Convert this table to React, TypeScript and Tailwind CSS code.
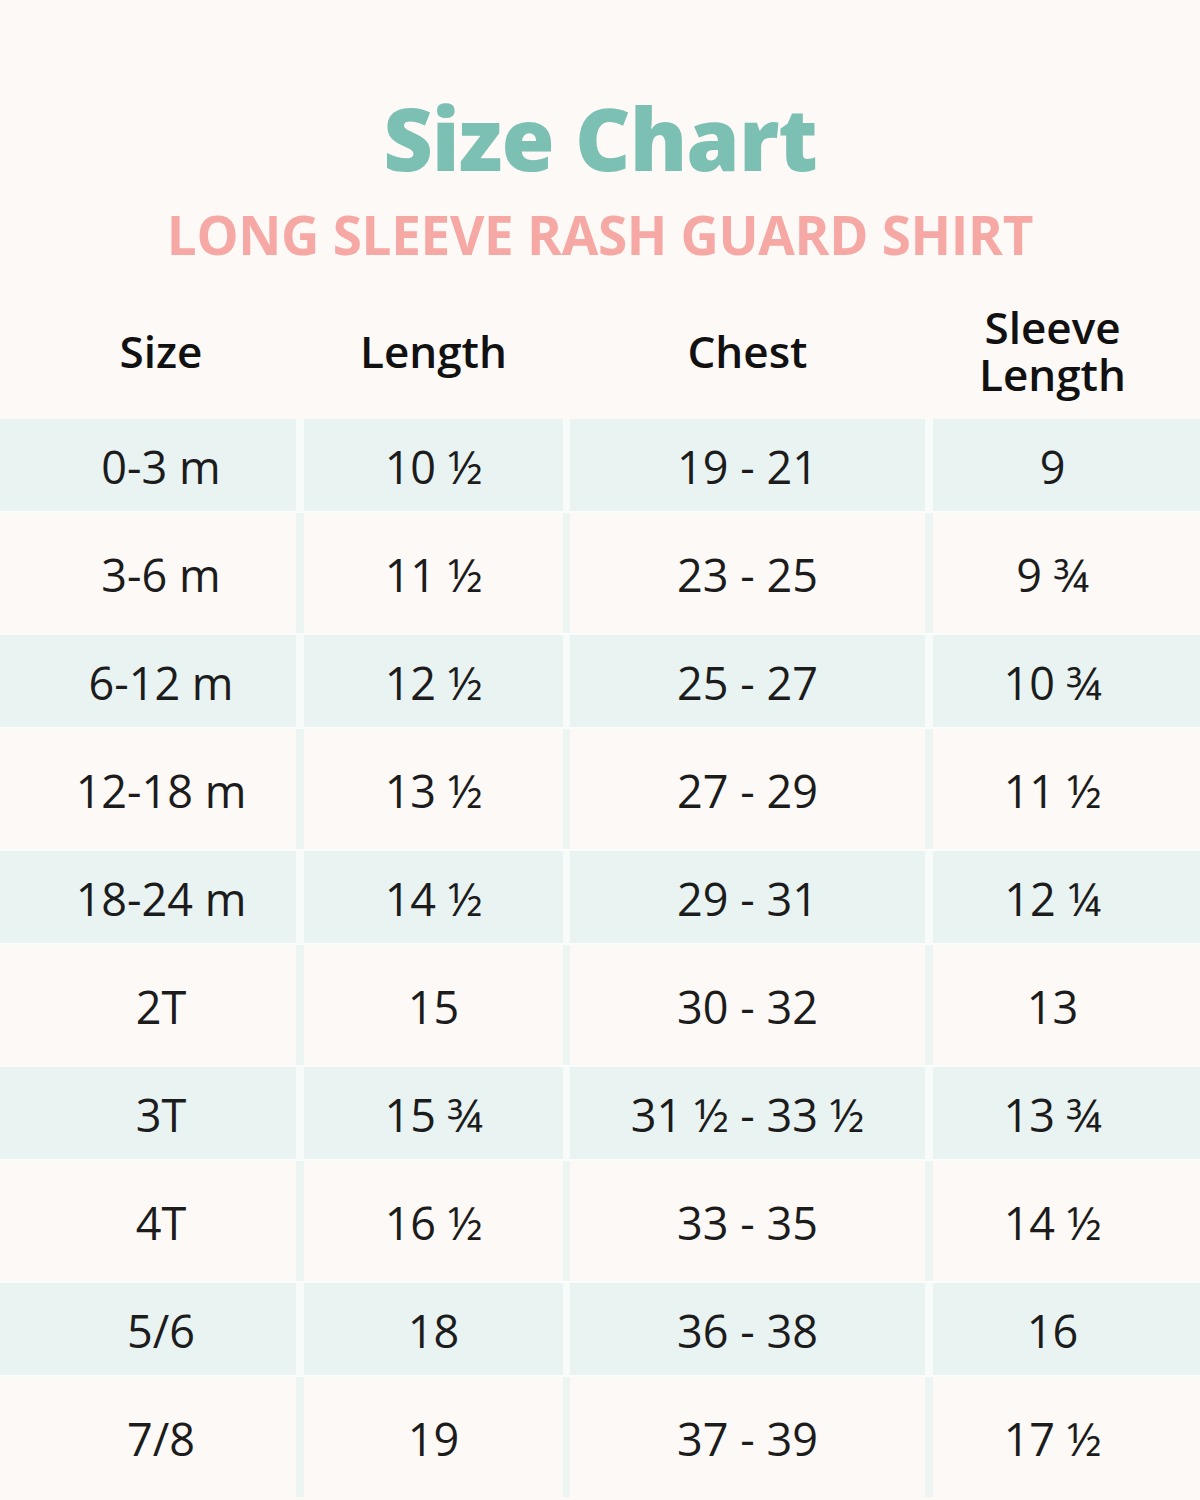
const rows: [string, string, string, string][] = [
  ["0-3 m", "10 ½", "19 - 21", "9"],
  ["3-6 m", "11 ½", "23 - 25", "9 ¾"],
  ["6-12 m", "12 ½", "25 - 27", "10 ¾"],
  ["12-18 m", "13 ½", "27 - 29", "11 ½"],
  ["18-24 m", "14 ½", "29 - 31", "12 ¼"],
  ["2T", "15", "30 - 32", "13"],
  ["3T", "15 ¾", "31 ½ - 33 ½", "13 ¾"],
  ["4T", "16 ½", "33 - 35", "14 ½"],
  ["5/6", "18", "36 - 38", "16"],
  ["7/8", "19", "37 - 39", "17 ½"],
]

function Row({ cells, tinted }: { cells: [string, string, string, string]; tinted: boolean }) {
  const cell = tinted ? "bg-[#e9f3f2]" : "bg-[#fdf9f6]"
  const h = tinted ? "h-[92px]" : "h-[120px]"
  return (
    <div className={`flex ${h} ${tinted ? "bg-[#f7fbfa]" : "bg-[#edf5f3]"}`}>
      <div className={`w-[296px] ${cell} flex items-center justify-center pl-[26px] pt-[4px]`}>{cells[0]}</div>
      <div className={`w-[259px] ml-[8px] ${cell} flex items-center justify-center pt-[4px]`}>{cells[1]}</div>
      <div className={`w-[355px] ml-[7px] ${cell} flex items-center justify-center pt-[4px]`}>{cells[2]}</div>
      <div className={`w-[267px] ml-[8px] ${cell} flex items-center justify-center pr-[28px] pt-[4px]`}>{cells[3]}</div>
    </div>
  )
}

export default function App() {
  return (
    <div className="w-[1200px] h-[1500px] overflow-hidden bg-[#fdf9f6] font-['Open_Sans',sans-serif]">
      <div className="flex flex-col items-center pt-[86px]">
        <h1 className="text-[86px] leading-[104px] font-extrabold text-[#7cbfb3] tracking-[-1px]">Size Chart</h1>
        <h2 className="mt-[14px] text-[53px] leading-[62px] font-bold text-[#f6a8a4] tracking-[-0.3px]">
          LONG SLEEVE RASH GUARD SHIRT
        </h2>
      </div>
      <div className="mt-[25px] flex h-[128px] items-center text-[44px] font-semibold text-[#111] leading-[47px] pb-[8px]">
        <div className="w-[296px] text-center pl-[26px]">Size</div>
        <div className="w-[259px] ml-[8px] text-center">Length</div>
        <div className="w-[355px] ml-[7px] text-center">Chest</div>
        <div className="w-[267px] ml-[8px] text-center pr-[28px]">
          Sleeve
          <br />
          Length
        </div>
      </div>
      <div className="flex flex-col gap-y-[2px] bg-[#fbfdfc] text-[45px] text-[#1c1c1c]">
        {rows.map((r, i) => (
          <Row key={i} cells={r} tinted={i % 2 === 0} />
        ))}
      </div>
    </div>
  )
}
